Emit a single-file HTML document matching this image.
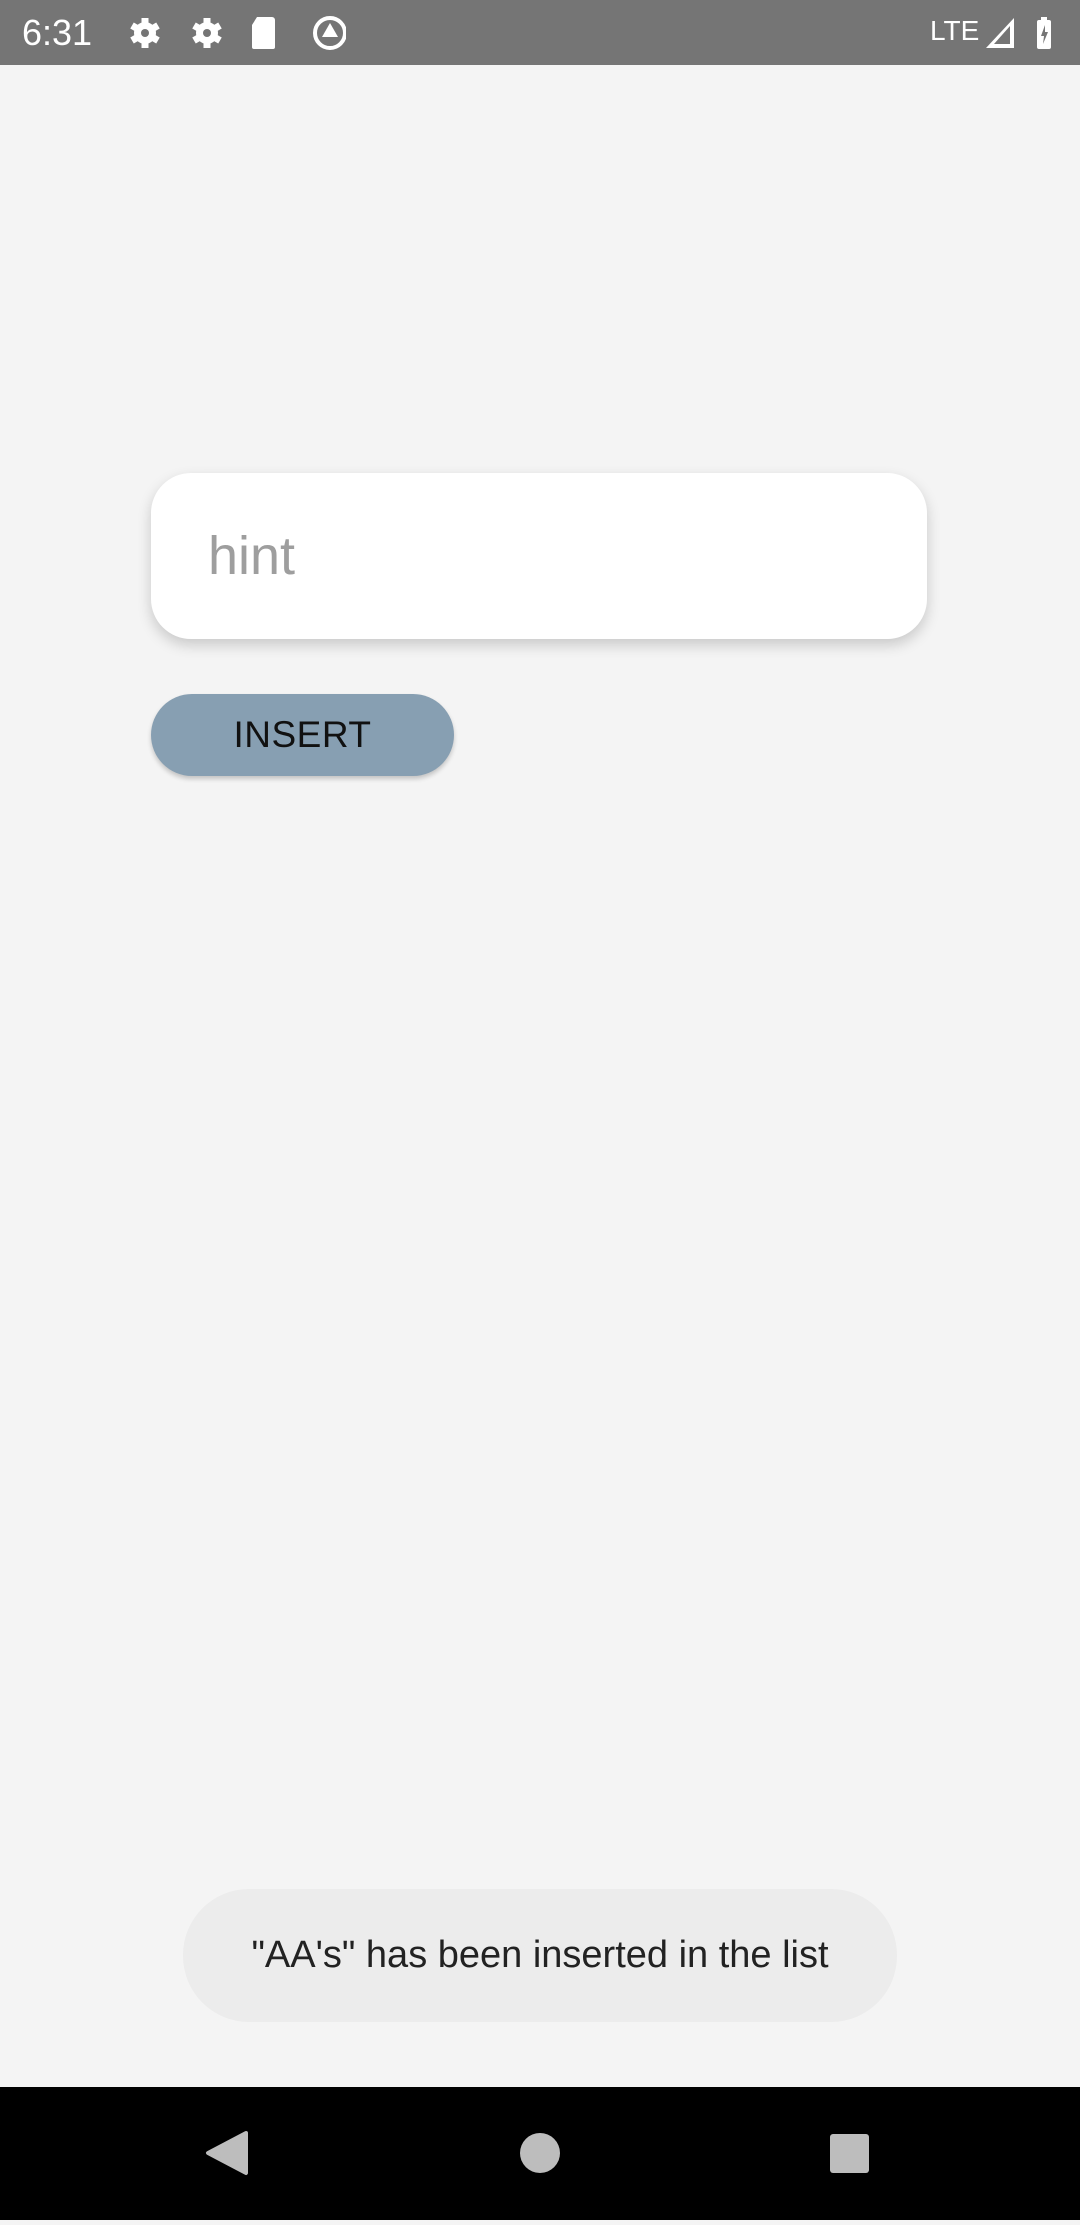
<!DOCTYPE html>
<html><head><meta charset="utf-8"><style>
body{margin:0;width:1080px;height:2220px;background:#f4f4f4;font-family:"Liberation Sans",sans-serif;position:relative;overflow:hidden}
.sb{position:absolute;left:0;top:0;width:1080px;height:65px;background:#757575;color:#fff}
.field{position:absolute;left:151px;top:473px;width:776px;height:166px;background:#fff;border-radius:40px;box-shadow:0 6px 14px rgba(0,0,0,.18)}
.hint{position:absolute;left:57px;top:52px;font-size:54px;color:#9e9e9e}
.btn{position:absolute;left:151px;top:694px;width:303px;height:82px;background:#879fb2;border-radius:41px;box-shadow:0 3px 5px rgba(0,0,0,.2);text-align:center;line-height:82px;font-size:37px;color:#111;letter-spacing:0.5px}
.toast{position:absolute;left:183px;top:1889px;width:714px;height:133px;background:#ececec;border-radius:66px;text-align:center;line-height:133px;font-size:38px;color:#222}
.nav{position:absolute;left:0;top:2087px;width:1080px;height:133px;background:#000}
</style></head><body>
<div class="sb">
<span style="position:absolute;left:22px;top:12px;font-size:36px">6:31</span>
<svg style="position:absolute;left:126px;top:15px" width="220" height="36" viewBox="0 0 220 36" fill="#fff">
<g transform="translate(19,18)"><circle r="11"/><rect x="-3.5" y="-15" width="7" height="30"/><rect x="-3.5" y="-15" width="7" height="30" transform="rotate(60)"/><rect x="-3.5" y="-15" width="7" height="30" transform="rotate(120)"/><circle r="4" fill="#757575"/></g>
<g transform="translate(81,18)"><circle r="11"/><rect x="-3.5" y="-15" width="7" height="30"/><rect x="-3.5" y="-15" width="7" height="30" transform="rotate(60)"/><rect x="-3.5" y="-15" width="7" height="30" transform="rotate(120)"/><circle r="4" fill="#757575"/></g>
<path d="M131 2h15a3 3 0 0 1 3 3v27a2 2 0 0 1-2 2h-19a2 2 0 0 1-2-2V10z"/>
<circle cx="204" cy="18" r="15" fill="none" stroke="#fff" stroke-width="4"/><path d="M204 8l-8 14h16z"/>
</svg>
<span style="position:absolute;left:930px;top:15px;font-size:28px">LTE</span>
<svg style="position:absolute;left:984px;top:16px" width="70" height="34" viewBox="0 0 70 34" fill="#fff">
<path d="M30 2v30H2z"/><path d="M26 10v18H10z" fill="#757575"/>
<rect x="53" y="4" width="14" height="29" rx="2"/><rect x="57" y="1" width="6" height="4"/><path d="M61 9l-4 11h3l-1 8 5-12h-3z" fill="#757575"/>
</svg>
</div>
<div class="field"><span class="hint">hint</span></div>
<div class="btn">INSERT</div>
<div class="toast">"AA's" has been inserted in the list</div>
<div class="nav">
<svg width="1080" height="133">
<path d="M246 46 L208 66 L246 86Z" fill="#bdbdbd" stroke="#bdbdbd" stroke-width="4" stroke-linejoin="round"/>
<circle cx="540" cy="66" r="20" fill="#bdbdbd"/>
<rect x="830" y="47" width="39" height="39" rx="3" fill="#bdbdbd"/>
</svg>
</div>
</body></html>
